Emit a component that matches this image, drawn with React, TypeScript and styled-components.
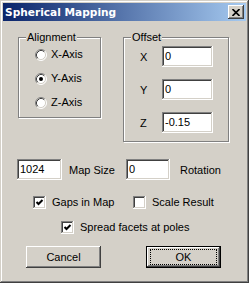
import React from "react";
import styled, { createGlobalStyle } from "styled-components";

const GlobalStyle = createGlobalStyle`
  body {
    margin: 0;
    background: #d4d0c8;
    font-family: "Liberation Sans", Arial, sans-serif;
    font-size: 11px;
    color: #000;
  }
`;

const Window = styled.div`
  box-sizing: border-box;
  width: 249px;
  height: 283px;
  padding: 3px;
  background: #d4d0c8;
  box-shadow: inset -1px -1px #404040, inset 1px 1px #d4d0c8,
    inset -2px -2px #808080, inset 2px 2px #ffffff;
  display: flex;
  flex-direction: column;
`;

const TitleBar = styled.div`
  height: 18px;
  display: flex;
  align-items: center;
  justify-content: space-between;
  padding: 0 2px 0 2px;
  background: linear-gradient(to right, #0a246a, #a6caf0);
`;

const TitleText = styled.span`
  font-family: "DejaVu Sans", Verdana, sans-serif;
  font-weight: bold;
  font-size: 10.6px;
  color: #ffffff;
`;

const CloseButton = styled.div`
  width: 16px;
  height: 14px;
  display: flex;
  align-items: center;
  justify-content: center;
  background: #d4d0c8;
  box-shadow: inset -1px -1px #404040, inset 1px 1px #ffffff,
    inset -2px -2px #808080, inset 2px 2px #d4d0c8;
`;

const Body = styled.div`
  display: flex;
  flex-direction: column;
`;

const GroupsRow = styled.div`
  display: flex;
  align-items: flex-start;
  gap: 22px;
  margin-top: 16px;
  padding-left: 15px;
`;

const Group = styled.div<{ w: number; h: number }>`
  position: relative;
  box-sizing: border-box;
  width: ${(p) => p.w}px;
  height: ${(p) => p.h}px;
  border: 1px solid #808080;
  box-shadow: inset 1px 1px #ffffff, 1px 1px #ffffff;
`;

const Caption = styled.span`
  position: absolute;
  top: -7px;
  left: 7px;
  padding: 0 1px;
  line-height: 13px;
  background: #d4d0c8;
`;

const RadioList = styled.div`
  display: flex;
  flex-direction: column;
  gap: 11px;
  padding: 10px 0 0 16px;
`;

const OptionRow = styled.label`
  display: flex;
  align-items: center;
  gap: 4px;
  height: 13px;
  line-height: 13px;
`;

const FieldList = styled.div`
  display: flex;
  flex-direction: column;
  gap: 12px;
  padding: 8px 0 0 16px;
`;

const FieldRow = styled.div`
  display: flex;
  align-items: center;
`;

const AxisLabel = styled.span`
  width: 22px;
`;

const Edit = styled.input<{ w: number }>`
  box-sizing: border-box;
  width: ${(p) => p.w}px;
  height: 21px;
  margin: 0;
  border: none;
  padding: 0 2px 1px 3px;
  background: #ffffff;
  font-family: "Liberation Sans", Arial, sans-serif;
  font-size: 11px;
  color: #000;
  outline: none;
  box-shadow: inset -1px -1px #ffffff, inset 1px 1px #808080,
    inset -2px -2px #d4d0c8, inset 2px 2px #404040;
`;

const MapRow = styled.div`
  display: flex;
  align-items: center;
  margin-top: 17px;
  padding-left: 14px;
`;

const InlineLabel = styled.span<{ w?: number; ml: number }>`
  margin-left: ${(p) => p.ml}px;
  ${(p) => (p.w ? `width: ${p.w}px;` : "")}
`;

const CheckRow = styled.div<{ mt: number; pl: number }>`
  display: flex;
  align-items: center;
  margin-top: ${(p) => p.mt}px;
  padding-left: ${(p) => p.pl}px;
`;

const CheckItem = styled.label<{ w?: number }>`
  display: flex;
  align-items: center;
  gap: 6px;
  height: 13px;
  line-height: 13px;
  ${(p) => (p.w ? `width: ${p.w}px;` : "")}
`;

const CheckBox = styled.span`
  box-sizing: border-box;
  width: 13px;
  height: 13px;
  display: flex;
  background: #ffffff;
  box-shadow: inset -1px -1px #ffffff, inset 1px 1px #808080,
    inset -2px -2px #d4d0c8, inset 2px 2px #404040;
`;

const ButtonRow = styled.div`
  display: flex;
  gap: 45px;
  margin-top: 12px;
  padding-left: 23px;
`;

const Button = styled.button<{ isDefault?: boolean }>`
  position: relative;
  box-sizing: border-box;
  width: 75px;
  height: 22px;
  margin: 0;
  padding: 0;
  background: #d4d0c8;
  font-family: "Liberation Sans", Arial, sans-serif;
  font-size: 11px;
  color: #000;
  border: ${(p) => (p.isDefault ? "1px solid #000" : "none")};
  box-shadow: inset -1px -1px #404040, inset 1px 1px #ffffff,
    inset -2px -2px #808080, inset 2px 2px #d4d0c8;

  ${(p) =>
    p.isDefault &&
    `
    &::after {
      content: "";
      position: absolute;
      top: 2px;
      bottom: 2px;
      left: 3px;
      right: 3px;
      border: 1px dotted #000;
    }
  `}
`;

const Radio = ({ checked }: { checked?: boolean }) => (
  <svg width="12" height="12" viewBox="0 0 12 12">
    <circle cx="6" cy="6" r="5" fill="#fff" />
    <path d="M2.11 9.89 A5.5 5.5 0 0 1 9.89 2.11" fill="none" stroke="#808080" />
    <path d="M9.89 2.11 A5.5 5.5 0 0 1 2.11 9.89" fill="none" stroke="#fff" />
    <path d="M2.82 9.18 A4.5 4.5 0 0 1 9.18 2.82" fill="none" stroke="#404040" />
    <path d="M9.18 2.82 A4.5 4.5 0 0 1 2.82 9.18" fill="none" stroke="#d4d0c8" />
    {checked && <circle cx="6" cy="6" r="2" fill="#000" />}
  </svg>
);

const Check = ({ checked }: { checked?: boolean }) => (
  <CheckBox>
    {checked && (
      <svg width="13" height="13" viewBox="0 0 13 13">
        <path d="M3.5 6 L5.5 8 L9.5 4" fill="none" stroke="#000" strokeWidth="2" />
      </svg>
    )}
  </CheckBox>
);

const App = () => {
  const axes = [
    { label: "X-Axis", checked: false },
    { label: "Y-Axis", checked: true },
    { label: "Z-Axis", checked: false },
  ];
  const offsets = [
    { label: "X", value: "0" },
    { label: "Y", value: "0" },
    { label: "Z", value: "-0.15" },
  ];

  return (
    <>
      <GlobalStyle />
      <Window>
        <TitleBar>
          <TitleText>Spherical Mapping</TitleText>
          <CloseButton>
            <svg width="8" height="7" viewBox="0 0 8 7">
              <path d="M0.5 0 L7.5 7 M7.5 0 L0.5 7" stroke="#000" strokeWidth="1.6" />
            </svg>
          </CloseButton>
        </TitleBar>
        <Body>
          <GroupsRow>
            <Group w={83} h={81}>
              <Caption>Alignment</Caption>
              <RadioList>
                {axes.map((a) => (
                  <OptionRow key={a.label}>
                    <Radio checked={a.checked} />
                    {a.label}
                  </OptionRow>
                ))}
              </RadioList>
            </Group>
            <Group w={106} h={105}>
              <Caption>Offset</Caption>
              <FieldList>
                {offsets.map((o) => (
                  <FieldRow key={o.label}>
                    <AxisLabel>{o.label}</AxisLabel>
                    <Edit w={51} readOnly value={o.value} />
                  </FieldRow>
                ))}
              </FieldList>
            </Group>
          </GroupsRow>
          <MapRow>
            <Edit w={45} readOnly value="1024" />
            <InlineLabel ml={7} w={57}>
              Map Size
            </InlineLabel>
            <Edit w={44} readOnly value="0" />
            <InlineLabel ml={10}>Rotation</InlineLabel>
          </MapRow>
          <CheckRow mt={16} pl={30}>
            <CheckItem w={100}>
              <Check checked />
              Gaps in Map
            </CheckItem>
            <CheckItem>
              <Check />
              Scale Result
            </CheckItem>
          </CheckRow>
          <CheckRow mt={12} pl={58}>
            <CheckItem>
              <Check checked />
              Spread facets at poles
            </CheckItem>
          </CheckRow>
          <ButtonRow>
            <Button>Cancel</Button>
            <Button isDefault>OK</Button>
          </ButtonRow>
        </Body>
      </Window>
    </>
  );
};

export default App;
